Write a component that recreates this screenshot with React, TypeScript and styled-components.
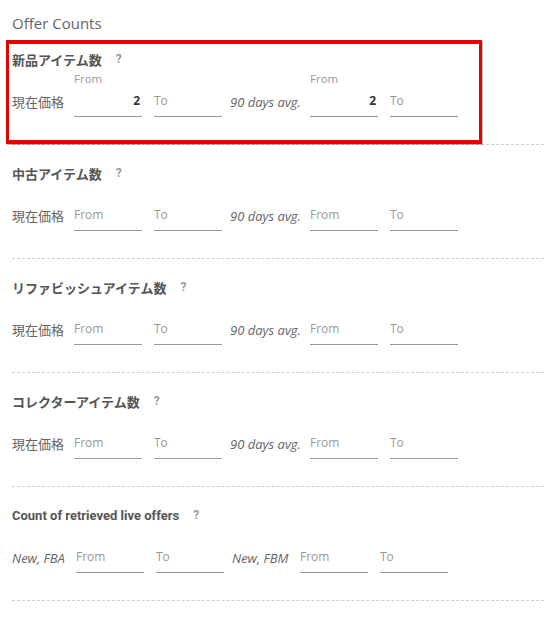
import styled, { createGlobalStyle } from 'styled-components';

const GlobalStyle = createGlobalStyle`
  body {
    margin: 0;
    background: #fff;
    font-family: "Open Sans", "Noto Sans CJK JP", sans-serif;
  }
`;

const Page = styled.div`
  padding: 15px 0 0 12px;
  width: 532px;
`;

const Title = styled.h2`
  margin: 0;
  font-size: 15px;
  line-height: 16px;
  font-weight: 400;
  color: #666;
`;

const Section = styled.section`
  position: relative;
  padding: 18px 0 27px;
  border-bottom: 1px dashed #cfcfcf;
`;

const Highlight = styled.div`
  position: absolute;
  left: -6px;
  top: 9px;
  width: 476px;
  bottom: 0;
  box-sizing: border-box;
  border-style: solid;
  border-color: #e60000;
  border-width: 4px 3px;
  box-shadow: 1px 1px 0 rgba(0, 0, 0, 0.25);
  pointer-events: none;
`;

const Heading = styled.div<{ $latin?: boolean }>`
  display: flex;
  align-items: center;
  height: 20px;
  margin-bottom: 3px;
  font-family: ${p => (p.$latin ? 'Roboto, "Noto Sans", sans-serif' : '"Noto Sans CJK JP", sans-serif')};
  font-size: 13px;
  font-weight: 700;
  color: #555;
`;

const Help = styled.span`
  margin-left: 14px;
  font-family: Roboto, "Noto Sans", sans-serif;
  font-size: 12px;
  font-weight: 700;
  color: #9a9a9a;
  cursor: help;
`;

const Row = styled.div`
  display: flex;
  align-items: flex-end;
  gap: 8px;
`;

const RowLabel = styled.span<{ $italic?: boolean; $width: number }>`
  width: ${p => p.$width}px;
  height: 30px;
  line-height: 30px;
  font-family: ${p => (p.$italic ? '"Open Sans", sans-serif' : '"Noto Sans CJK JP", sans-serif')};
  font-size: 13px;
  font-style: ${p => (p.$italic ? 'italic' : 'normal')};
  color: #666;
  white-space: nowrap;
  margin-right: ${p => (p.$italic ? 0 : 2)}px;
`;

const Pair = styled.div`
  display: flex;
  gap: 12px;
`;

const Field = styled.label`
  display: flex;
  flex-direction: column;
  width: 68px;
`;

const FloatLabel = styled.span<{ $shown: boolean }>`
  height: 14px;
  line-height: 14px;
  font-size: 11.5px;
  color: #999;
  visibility: ${p => (p.$shown ? 'visible' : 'hidden')};
`;

const Input = styled.input<{ $filled: boolean }>`
  box-sizing: border-box;
  width: 68px;
  height: 31px;
  padding: 0 2px 1px 0;
  border: none;
  border-bottom: 1px solid #999;
  outline: none;
  background: transparent;
  font-family: "Open Sans", sans-serif;
  font-size: 12px;
  font-weight: ${p => (p.$filled ? 700 : 400)};
  color: #333;
  text-align: ${p => (p.$filled ? 'right' : 'left')};
  &::placeholder {
    color: #999;
  }
`;

type RangeProps = { from?: string; to?: string };

const Range = ({ from = '', to = '' }: RangeProps) => (
  <Pair>
    <Field>
      <FloatLabel $shown={from !== ''}>From</FloatLabel>
      <Input $filled={from !== ''} placeholder="From" defaultValue={from} />
    </Field>
    <Field>
      <FloatLabel $shown={to !== ''}>To</FloatLabel>
      <Input $filled={to !== ''} placeholder="To" defaultValue={to} />
    </Field>
  </Pair>
);

type ItemProps = { title: string; current?: string; avg?: string; highlight?: boolean };

const ItemSection = ({ title, current, avg, highlight }: ItemProps) => (
  <Section>
    {highlight && <Highlight />}
    <Heading>
      {title}
      <Help>?</Help>
    </Heading>
    <Row>
      <RowLabel $width={52}>現在価格</RowLabel>
      <Range from={current} />
      <RowLabel $italic $width={72}>90 days avg.</RowLabel>
      <Range from={avg} />
    </Row>
  </Section>
);

const items: ItemProps[] = [
  { title: '新品アイテム数', current: '2', avg: '2', highlight: true },
  { title: '中古アイテム数' },
  { title: 'リファビッシュアイテム数' },
  { title: 'コレクターアイテム数' },
];

export default function App() {
  return (
    <Page>
      <GlobalStyle />
      <Title>Offer Counts</Title>
      {items.map(item => (
        <ItemSection key={item.title} {...item} />
      ))}
      <Section>
        <Heading $latin>
          Count of retrieved live offers
          <Help>?</Help>
        </Heading>
        <Row>
          <RowLabel $italic $width={56}>New, FBA</RowLabel>
          <Range />
          <RowLabel $italic $width={60}>New, FBM</RowLabel>
          <Range />
        </Row>
      </Section>
    </Page>
  );
}
